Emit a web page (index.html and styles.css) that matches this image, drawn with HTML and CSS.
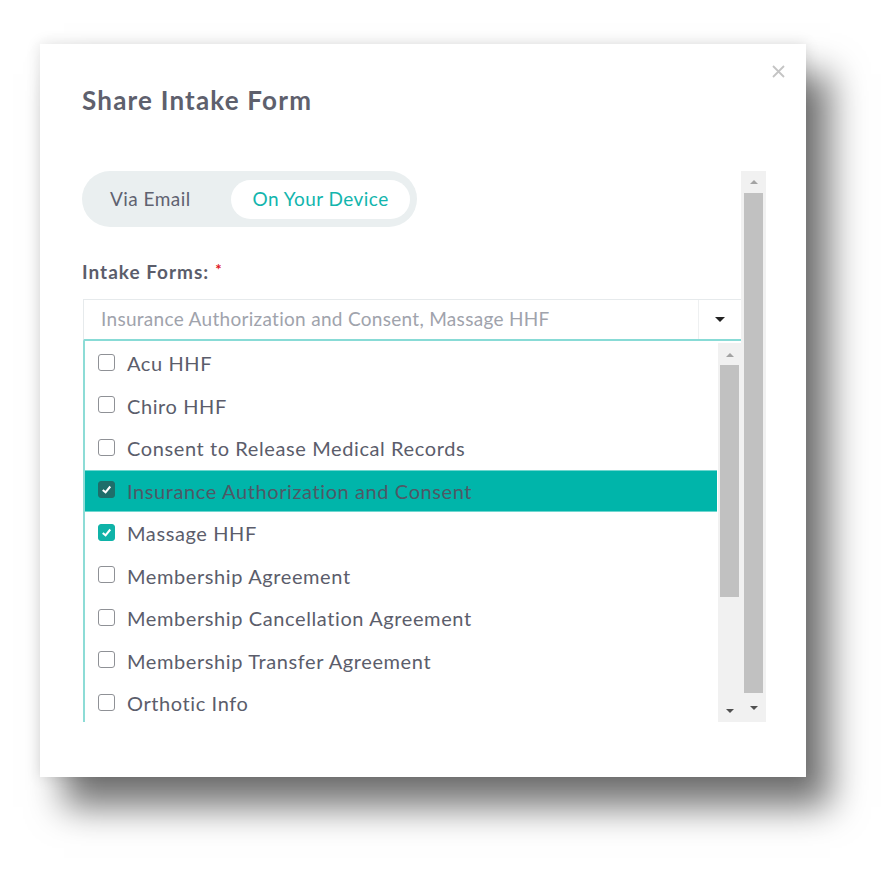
FILE: index.html
```html
<!DOCTYPE html>
<html>
<head>
<meta charset="utf-8">
<link rel="stylesheet" href="styles.css">
</head>
<body>
<div class="dialog">
  <button class="close" aria-label="Close">
    <svg width="13" height="13" viewBox="0 0 13 13"><path d="M1 1L12 12M12 1L1 12" stroke="#c4c4c4" stroke-width="1.8"/></svg>
  </button>
  <h1 class="title">Share Intake Form</h1>
  <div class="scroll-area">
    <div class="scroll-content">
      <div class="toggle">
        <span class="seg">Via Email</span>
        <span class="seg seg-active">On Your Device</span>
      </div>
      <div class="label">Intake Forms:<span class="req">*</span></div>
      <div class="select">
        <div class="select-value">Insurance Authorization and Consent, Massage HHF</div>
        <div class="select-btn"><span class="caret"></span></div>
      </div>
      <div class="list">
        <div class="list-items">
          <div class="item"><span class="cb"></span>Acu HHF</div>
          <div class="item"><span class="cb"></span>Chiro HHF</div>
          <div class="item"><span class="cb"></span>Consent to Release Medical Records</div>
          <div class="item item-hl"><span class="cb cb-on cb-dark"><svg viewBox="0 0 16 16"><path d="M4 8.5L7 11L12 4.8" fill="none" stroke="#fff" stroke-width="2.2"/></svg></span>Insurance Authorization and Consent</div>
          <div class="item"><span class="cb cb-on"><svg viewBox="0 0 16 16"><path d="M4 8.5L7 11L12 4.8" fill="none" stroke="#fff" stroke-width="2.2"/></svg></span>Massage HHF</div>
          <div class="item"><span class="cb"></span>Membership Agreement</div>
          <div class="item"><span class="cb"></span>Membership Cancellation Agreement</div>
          <div class="item"><span class="cb"></span>Membership Transfer Agreement</div>
          <div class="item"><span class="cb"></span>Orthotic Info</div>
        </div>
        <div class="sbar sbar-inner">
          <span class="arr arr-up"></span>
          <div class="thumb-wrap"><div class="thumb thumb-inner"></div></div>
          <span class="arr arr-down"></span>
        </div>
      </div>
    </div>
    <div class="sbar sbar-outer">
      <span class="arr arr-up"></span>
      <div class="thumb-wrap"><div class="thumb thumb-outer"></div></div>
      <span class="arr arr-down"></span>
    </div>
  </div>
</div>
</body>
</html>
```
FILE: styles.css
```css
* { box-sizing: border-box; }
html, body { margin: 0; background: #fff; }
body {
  min-height: 874px;
  padding: 44px 0 0 40px;
  font-family: Lato, "Open Sans", sans-serif;
  color: #5b5d6b;
}
.dialog {
  position: relative;
  width: 766px;
  height: 733px;
  background: #fff;
  padding: 40px 0 0 42px;
  box-shadow: 24px 30px 34px rgba(0,0,0,0.55), 0 0 14px rgba(0,0,0,0.12);
}
.close {
  position: absolute;
  top: 21px;
  right: 21px;
  border: 0;
  background: none;
  padding: 0;
  width: 13px;
  height: 13px;
}
.close svg { display: block; }
.title {
  margin: 0;
  font-size: 26px;
  font-weight: 700;
  letter-spacing: 1.2px;
  line-height: 32px;
  color: #5e606d;
}
.scroll-area {
  margin-top: 55px;
  display: flex;
  height: 551px;
  width: 684px;
  overflow: hidden;
}
.scroll-content {
  width: 659px;
  flex: none;
}
.toggle {
  display: inline-flex;
  align-items: center;
  height: 56px;
  background: #eaeff0;
  border-radius: 28px;
  padding: 0 7px 2px 28px;
}
.seg {
  font-size: 19px;
  letter-spacing: 0.45px;
  color: #5f6270;
}
.seg:first-child { margin-right: 40px; }
.seg-active {
  background: #fff;
  color: #12b5ad;
  height: 39px;
  line-height: 38px;
  border-radius: 20px;
  padding: 0 21px 0 22px;
  margin-top: 2px;
}
.label {
  margin-top: 33px;
  font-size: 19px;
  font-weight: 700;
  letter-spacing: 1px;
  line-height: 24px;
  color: #5b5d6b;
}
.req {
  color: #e0141e;
  font-size: 15px;
  margin-left: 6px;
  vertical-align: top;
  position: relative;
  top: -3px;
}
.select {
  margin-top: 15px;
  margin-left: 1px;
  display: flex;
  height: 42px;
  border: 1px solid #e6eaec;
  border-bottom: 2px solid #88dbd6;
  border-right: 0;
}
.select-value {
  flex: 1;
  padding-left: 17px;
  font-size: 19px;
  letter-spacing: 0.3px;
  line-height: 38px;
  color: #a0a3ac;
  white-space: nowrap;
  overflow: hidden;
}
.select-btn {
  width: 43px;
  border-left: 1px solid #eef0f1;
  display: flex;
  align-items: center;
  justify-content: center;
}
.caret {
  width: 0; height: 0;
  border-left: 5px solid transparent;
  border-right: 5px solid transparent;
  border-top: 5px solid #222;
}
.list {
  margin-left: 1px;
  display: flex;
  height: 382px;
  border-left: 2px solid #8ddcd6;
}
.list-items {
  flex: 1;
  padding-top: 1px;
  min-width: 0;
}
.item {
  height: 42.5px;
  display: flex;
  align-items: center;
  padding-left: 13px;
  font-size: 20px;
  letter-spacing: 0.6px;
  color: #5b5d6b;
  white-space: nowrap;
}
.item-hl {
  background: #00b5aa;
  border-top: 1px solid #6fd6cf;
  border-bottom: 1px solid #6fd6cf;
  margin-right: 1px;
  color: #4f5866;
}
.cb {
  width: 17px;
  height: 17px;
  border: 1.5px solid #8f9196;
  border-radius: 3px;
  margin-right: 12px;
  flex: none;
  position: relative;
  top: -1px;
}
.cb svg { display: block; width: 100%; height: 100%; }
.cb-on { background: #0fb3a8; border-color: #0fb3a8; }
.cb-dark { background: #1e6e6a; border-color: #1e6e6a; }
.sbar {
  display: flex;
  flex-direction: column;
  align-items: center;
  background: #f1f1f1;
  flex: none;
}
.sbar-inner { width: 23px; margin-top: 2px; }
.sbar-outer { width: 25px; }
.thumb-wrap { flex: 1; width: 100%; display: flex; flex-direction: column; }
.thumb { background: #c1c1c1; }
.thumb-inner { height: 232px; margin: 0 2px 0 2px; }
.thumb-outer { height: 500px; margin: 0 3px 0 3px; }
.arr {
  width: 0; height: 0;
  border-left: 4px solid transparent;
  border-right: 4px solid transparent;
  margin: 8px 0;
}
.arr-up { border-bottom: 4px solid #a3a3a3; }
.arr-down { border-top: 4px solid #505050; }
.sbar-outer .arr-up { margin: 9px 0 9px; }
.sbar-outer .arr-down { margin: 12px 0 12px; }
.sbar-inner .arr-up { margin: 10px 0 8px; }
.sbar-inner .arr-down { margin: 8px 0 10px; }
```
